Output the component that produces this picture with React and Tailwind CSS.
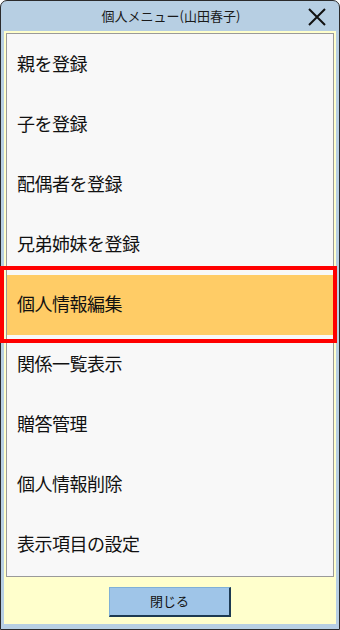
import React from 'react';

const items = [
    '親を登録',
    '子を登録',
    '配偶者を登録',
    '兄弟姉妹を登録',
    '個人情報編集',
    '関係一覧表示',
    '贈答管理',
    '個人情報削除',
    '表示項目の設定',
];

const selected = 4;

const App = () => {
    return (
        <div
            className="relative w-[340px] h-[630px] overflow-hidden"
            style={{ fontFamily: '"Noto Sans CJK JP", "Noto Sans", sans-serif' }}
        >
            <div className="flex flex-col w-full h-full bg-[#b7cfe3] border border-[#2b2b2b] rounded-t-[7px]">
                {/* title bar */}
                <div className="flex items-center h-[30px] shrink-0 relative">
                    <span className="flex-1 text-center text-[13px] text-[#1a1a1a] pl-[2px]">個人メニュー(山田春子)</span>
                    <button className="absolute right-[12px] top-[6px] w-[20px] h-[20px] flex items-center justify-center">
                        <svg width="18" height="18" viewBox="0 0 18 18">
                            <path d="M1 1 L17 17 M17 1 L1 17" stroke="#111" strokeWidth="2" />
                        </svg>
                    </button>
                </div>

                {/* body */}
                <div className="flex flex-col flex-1 mx-[3px] mb-[5px] bg-[#ffffcc] px-[2px] pt-[2px]">
                    <div className="flex flex-col border border-[#9a9a9a] bg-[#f8f8f8] pt-[1px] pb-[1px]">
                        {items.map((label, i) => (
                            <div
                                key={label}
                                className={`flex items-center h-[60px] pl-[10px] pb-[3px] text-[18px] tracking-[-0.5px] text-[#111] ${i === selected ? 'bg-[#ffcc66]' : ''}`}
                            >
                                {label}
                            </div>
                        ))}
                    </div>

                    <div className="flex flex-1 items-center justify-center pt-[2px]">
                        <button className="w-[122px] h-[30px] bg-[#9fc5e8] border border-t-[#7fb0d8] border-l-[#7fb0d8] border-r-2 border-b-2 border-r-[#1d3a52] border-b-[#1d3a52] text-[13px] text-[#111]">
                            閉じる
                        </button>
                    </div>
                </div>
            </div>

            {/* selection highlight */}
            <div className="absolute left-0 top-[266px] w-[337px] h-[77px] border-4 border-[#ff0000] pointer-events-none" />
        </div>
    );
};

export default App;
